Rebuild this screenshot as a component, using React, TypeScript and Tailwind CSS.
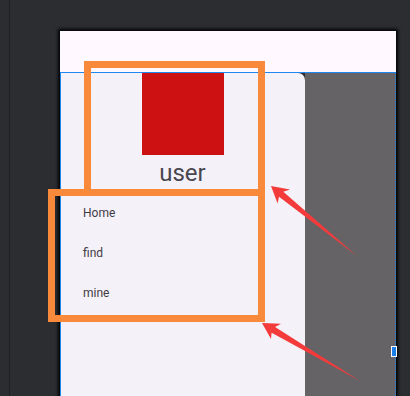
import React from 'react';

const MENU = ['Home', 'find', 'mine'];

function Arrows() {
  return (
    <svg className="pointer-events-none absolute inset-0" width={410} height={396} viewBox="0 0 410 396">
      <polygon
        points="271,186 290,189.5 283.3,191.8 357,256 279,196.8 277.6,203.5"
        fill="#f43b3b"
      />
      <polygon
        points="262,323 281,323.8 275.1,327 360,381 271.6,332.8 271,339"
        fill="#f43b3b"
      />
    </svg>
  );
}

export default function App() {
  return (
    <div
      className="relative h-[396px] w-[410px] overflow-hidden bg-[#2b2d31] pl-[60px] pt-[31px]"
      style={{ fontFamily: 'Roboto, "Noto Sans", sans-serif' }}
    >
      <div className="absolute top-0 bottom-0 left-[9px] w-px bg-[#1f2023]" />

      {/* device preview */}
      <div className="flex h-[365px] w-[336px] flex-col shadow-[0_0_3px_2px_rgba(0,0,0,0.95)]">
        <div className="h-[41px] bg-[#fff8fe]" />
        <div className="flex flex-1 border-t border-[#1e88f0]">
          <nav className="flex w-[245px] flex-col rounded-tr-[7px] bg-[#f5f1f8]">
            <div className="flex flex-col items-center">
              <div className="h-[82px] w-[82px] bg-[#cd1011]" />
              <p className="mt-[4px] text-[24px] leading-[28px] text-[#49454f]">user</p>
            </div>
            <ul className="mt-[6px] flex flex-col">
              {MENU.map((item) => (
                <li key={item} className="h-[40px] pl-[23px] text-[12px] leading-[40px] text-[#3f3c44]">
                  {item}
                </li>
              ))}
            </ul>
          </nav>
          <div className="flex-1 bg-[#656366]" />
        </div>
      </div>

      {/* selection outline */}
      <div className="pointer-events-none absolute top-[72px] left-[60px] h-[330px] w-[336px] border-l border-[#1e88f0]" />
      <div className="pointer-events-none absolute top-[72px] left-[395px] h-[330px] w-px border-r border-dotted border-[#1e88f0]" />
      <div className="absolute top-[346px] left-[391px] h-[11px] w-[6px] border border-white bg-[#1e7fe8]" />

      {/* annotations */}
      <div className="pointer-events-none absolute top-[61px] left-[84px] h-[135px] w-[181px] border-[7px] border-[#f98a3b]" />
      <div className="pointer-events-none absolute top-[189px] left-[48px] h-[133px] w-[217px] border-[7px] border-[#f98a3b]" />
      <Arrows />
    </div>
  );
}
